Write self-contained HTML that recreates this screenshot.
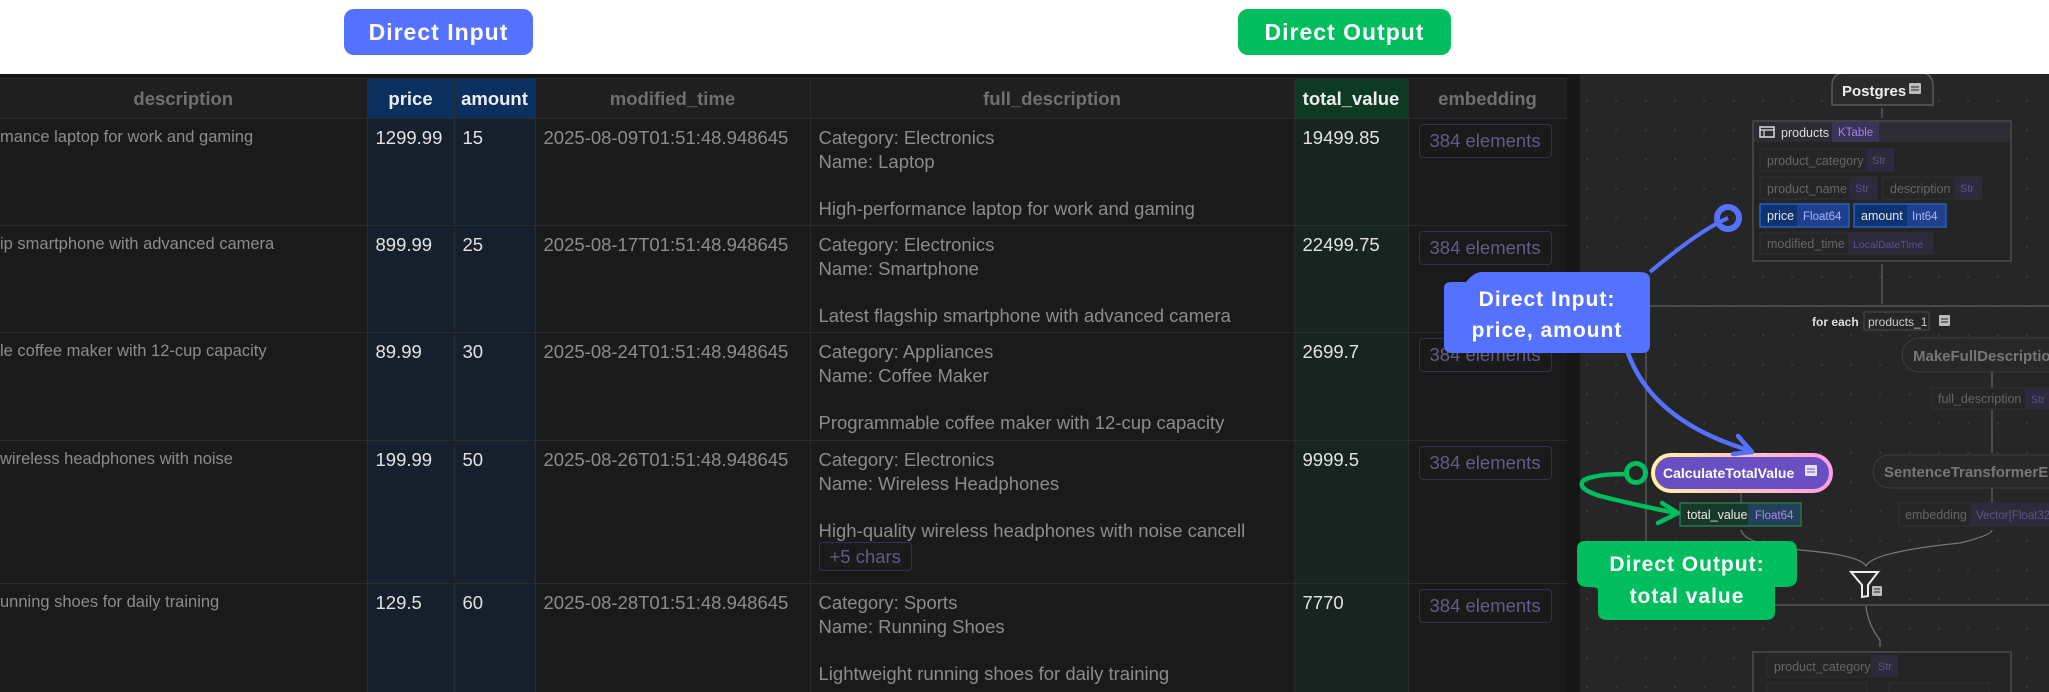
<!DOCTYPE html>
<html><head><meta charset="utf-8"><style>
*{margin:0;padding:0;box-sizing:border-box}
html{width:2049px;height:692px;overflow:hidden}
body{width:2049px;height:692px;overflow:hidden;background:#fff;position:relative;font-family:"Liberation Sans",sans-serif}
.badge{position:absolute;top:9px;height:46px;border-radius:10px;color:#fff;font-weight:bold;font-size:23px;letter-spacing:1px;display:flex;align-items:center;justify-content:center}
#dark{position:absolute;left:0;top:74px;width:2049px;height:618px;background:#151515}
#tw{position:absolute;left:0;top:78px;width:1567px;height:614px;overflow:hidden}
table{border-collapse:collapse;table-layout:fixed;width:1567px;font-size:18.5px;color:#8c8c8c}
th{height:40px;background:#1f1f1f;color:#707070;font-size:18.5px;font-weight:bold;border:1px solid #2b2b2b;text-align:center}
td{background:#1a1a1a;border:1px solid #2b2b2b;vertical-align:top;padding:7px 8px 0 8px;line-height:23.5px;white-space:nowrap;overflow:hidden}
td.d{padding-left:0;border-left:none;font-size:16.5px}
th:first-child{border-left:none}
th.b{background:#0b2f5e;color:#eee}
td.b{background:#161f2c;color:#e2e2e2}
th.g{background:#0e3a24;color:#eee}
td.g{background:#172420;color:#e2e2e2}
.emb{display:inline-block;border:1.5px solid #35314a;border-radius:4px;color:#625c88;padding:4px 10px;line-height:24px;margin-top:-2px;margin-left:2px}
.more{display:inline-block;border:1.5px solid #35314a;border-radius:4px;color:#625c88;padding:2px 10px;line-height:23px}
</style></head><body>
<div class="badge" style="left:344px;width:189px;background:#5471ff">Direct Input</div>
<div class="badge" style="left:1238px;width:213px;background:#00bd5e">Direct Output</div>
<div id="dark"></div>
<div id="tw"><table>
<colgroup><col style="width:367px"><col style="width:87px"><col style="width:81px"><col style="width:275px"><col style="width:484px"><col style="width:114px"><col style="width:159px"></colgroup>
<tr><th>description</th><th class="b">price</th><th class="b">amount</th><th>modified_time</th><th>full_description</th><th class="g">total_value</th><th>embedding</th></tr>
<tr style="height:107px"><td class="d">mance laptop for work and gaming</td><td class="b">1299.99</td><td class="b">15</td><td>2025-08-09T01:51:48.948645</td><td>Category: Electronics<br>Name: Laptop<br><br>High-performance laptop for work and gaming</td><td class="g">19499.85</td><td><span class="emb">384 elements</span></td></tr>
<tr style="height:107px"><td class="d">ip smartphone with advanced camera</td><td class="b">899.99</td><td class="b">25</td><td>2025-08-17T01:51:48.948645</td><td>Category: Electronics<br>Name: Smartphone<br><br>Latest flagship smartphone with advanced camera</td><td class="g">22499.75</td><td><span class="emb">384 elements</span></td></tr>
<tr style="height:108px"><td class="d">le coffee maker with 12-cup capacity</td><td class="b">89.99</td><td class="b">30</td><td>2025-08-24T01:51:48.948645</td><td>Category: Appliances<br>Name: Coffee Maker<br><br>Programmable coffee maker with 12-cup capacity</td><td class="g">2699.7</td><td><span class="emb">384 elements</span></td></tr>
<tr style="height:143px"><td class="d">wireless headphones with noise</td><td class="b">199.99</td><td class="b">50</td><td>2025-08-26T01:51:48.948645</td><td>Category: Electronics<br>Name: Wireless Headphones<br><br>High-quality wireless headphones with noise cancell<br><span class="more">+5 chars</span></td><td class="g">9999.5</td><td><span class="emb">384 elements</span></td></tr>
<tr style="height:120px"><td class="d">unning shoes for daily training</td><td class="b">129.5</td><td class="b">60</td><td>2025-08-28T01:51:48.948645</td><td>Category: Sports<br>Name: Running Shoes<br><br>Lightweight running shoes for daily training</td><td class="g">7770</td><td><span class="emb">384 elements</span></td></tr>
</table></div>
<svg style="position:absolute;left:1400px;top:74px" width="649" height="618" viewBox="1400 74 649 618" font-family="Liberation Sans, sans-serif">
<defs>
<pattern id="dots" patternUnits="userSpaceOnUse" x="1586" y="100" width="29.33" height="29.33"><circle cx="0.8" cy="0.8" r="1.2" fill="#3d3d3d"/></pattern>
<linearGradient id="gb" x1="0" x2="1"><stop offset="0" stop-color="#fff3a0"/><stop offset="1" stop-color="#ff9ee0"/></linearGradient>
</defs>
<rect x="1567" y="74" width="13" height="618" fill="#161616"/>
<rect x="1580" y="74" width="469" height="618" fill="#262626"/>
<rect x="1580" y="74" width="469" height="618" fill="url(#dots)"/>
<path d="M1832 105 V86 Q1832 73 1845 73 H1920 Q1933 73 1933 86 V105 Z" fill="#2a2a2a" stroke="#5a5a5a" stroke-width="1.5"/>
<text x="1842" y="96" fill="#eee" font-size="15" font-weight="bold">Postgres</text>
<rect x="1909" y="83" width="12" height="11" fill="#bbb" rx="1"/><path d="M1911 87h8M1911 90h8" stroke="#2a2a2a"/>
<path d="M1882 108V118M1882 264V304" stroke="#666" stroke-width="1.2"/>
<rect x="1753" y="121" width="258" height="140" fill="#242424" stroke="#555" stroke-width="1.2"/>
<rect x="1753.6" y="121.6" width="256.8" height="20.5" fill="#2e2c33"/>
<rect x="1760" y="127" width="14" height="10" fill="none" stroke="#ddd" stroke-width="1.5"/><path d="M1760 130h14M1764 130v7" stroke="#ddd" stroke-width="1.2"/>
<text x="1781" y="137" fill="#ddd" font-size="12.5">products</text>
<rect x="1832" y="122" width="47" height="20" fill="#3b3358"/><text x="1838" y="136" fill="#9b88e6" font-size="11.5">KTable</text>
<g font-size="12.5">
<rect x="1760" y="149" width="134" height="22" fill="#262626" stroke="#303030"/><rect x="1866" y="149" width="28" height="22" fill="#2e2a3c"/>
<text x="1767" y="165" fill="#666">product_category</text><text x="1872" y="164" fill="#5b5288" font-size="11">Str</text>
<rect x="1760" y="177" width="117" height="22" fill="#262626" stroke="#303030"/><rect x="1849" y="177" width="28" height="22" fill="#2e2a3c"/>
<text x="1767" y="193" fill="#666">product_name</text><text x="1855" y="192" fill="#5b5288" font-size="11">Str</text>
<rect x="1883" y="177" width="99" height="22" fill="#262626" stroke="#303030"/><rect x="1954" y="177" width="28" height="22" fill="#2e2a3c"/>
<text x="1890" y="193" fill="#666">description</text><text x="1960" y="192" fill="#5b5288" font-size="11">Str</text>
<rect x="1760" y="204" width="89" height="23" fill="#0d3370" stroke="#2e6fe0" stroke-width="1.2"/><rect x="1797" y="205" width="51" height="21" fill="#20408e"/>
<text x="1767" y="220" fill="#e8e8e8">price</text><text x="1803" y="220" fill="#a9b8ff" font-size="11.5">Float64</text>
<rect x="1854" y="204" width="92" height="23" fill="#0d3370" stroke="#2e6fe0" stroke-width="1.2"/><rect x="1907" y="205" width="38" height="21" fill="#20408e"/>
<text x="1861" y="220" fill="#e8e8e8">amount</text><text x="1912" y="220" fill="#a9b8ff" font-size="11.5">Int64</text>
<rect x="1760" y="233" width="173" height="21" fill="#262626" stroke="#303030"/><rect x="1848" y="233" width="85" height="21" fill="#2e2a3c"/>
<text x="1767" y="248" fill="#666">modified_time</text><text x="1853" y="248" fill="#5b5288" font-size="10.5">LocalDateTime</text>
</g>
<path d="M1646 306H2049M1646 306V605H2049" fill="none" stroke="#555" stroke-width="1.5"/>
<text x="1812" y="326" fill="#ddd" font-size="12" font-weight="bold">for each</text>
<rect x="1864" y="312" width="65" height="18" fill="#262626" stroke="#4a4a4a"/><text x="1868" y="326" fill="#ccc" font-size="12">products_1</text>
<rect x="1939" y="315" width="11" height="11" fill="#bbb" rx="1"/><path d="M1941 319h7M1941 322h7" stroke="#262626"/>
<rect x="1902" y="338" width="200" height="34" rx="17" fill="#282828" stroke="#3e3e3e"/>
<text x="1913" y="361" fill="#777" font-size="15" font-weight="bold">MakeFullDescription</text>
<path d="M1992 372V388M1992 409V453M1992 488V503" stroke="#666" stroke-width="1.2"/>
<rect x="1932" y="388" width="130" height="21" fill="#262626" stroke="#303030"/><rect x="2025" y="388" width="30" height="21" fill="#2e2a3c"/>
<text x="1938" y="403" fill="#666" font-size="12.5">full_description</text><text x="2031" y="403" fill="#5b5288" font-size="11">Str</text>
<rect x="1873" y="455" width="220" height="33" rx="16.5" fill="#282828" stroke="#3e3e3e"/>
<text x="1884" y="477" fill="#777" font-size="15" font-weight="bold">SentenceTransformerEmbed</text>
<rect x="1899" y="503" width="160" height="23" fill="#262626" stroke="#303030"/><rect x="1970" y="503" width="90" height="23" fill="#2e2a3c"/>
<text x="1905" y="519" fill="#666" font-size="12.5">embedding</text><text x="1976" y="519" fill="#5b5288" font-size="11.5">Vector[Float32]</text>
<rect x="1653" y="455" width="178" height="36" rx="18" fill="#6a4fc2" stroke="url(#gb)" stroke-width="4"/>
<text x="1663" y="478" fill="#fff" font-size="14" font-weight="bold">CalculateTotalValue</text>
<rect x="1805" y="465" width="12" height="11" fill="#e8e0ff" rx="1"/><path d="M1807 469h8M1807 472h8" stroke="#6a4fc2"/>
<path d="M1741 493V503" stroke="#666"/>
<rect x="1680" y="503" width="121" height="23" fill="#17382a" stroke="#2a8a5a" stroke-width="1.2"/><rect x="1748" y="504" width="52" height="21" fill="#24405a"/>
<text x="1687" y="519" fill="#e8e8e8" font-size="12.5">total_value</text><text x="1755" y="519" fill="#a48ef0" font-size="11.5">Float64</text>
<path d="M1741 530Q1745 545 1800 550Q1860 555 1866 566Q1872 552 1960 543Q1992 535 1992 530" fill="none" stroke="#777" stroke-width="1.2"/>
<path d="M1851 572H1878L1868 585V596L1862 597V585Z" fill="none" stroke="#eee" stroke-width="2"/>
<rect x="1872" y="586" width="10" height="10" fill="#bbb" rx="1"/><path d="M1874 589h6M1874 592h6" stroke="#262626"/>
<path d="M1866 606Q1868 625 1880 640V647" fill="none" stroke="#777" stroke-width="1.2"/>
<rect x="1753" y="652" width="258" height="60" fill="#242424" stroke="#555" stroke-width="1.2"/>
<rect x="1767" y="655" width="130" height="22" fill="#262626" stroke="#303030"/><rect x="1871" y="655" width="27" height="22" fill="#2e2a3c"/>
<text x="1774" y="671" fill="#666" font-size="12.5">product_category</text><text x="1878" y="670" fill="#5b5288" font-size="11">Str</text>
<rect x="1767" y="683" width="100" height="12" fill="#262626" stroke="#303030"/><rect x="1889" y="683" width="100" height="12" fill="#262626" stroke="#303030"/>
<path d="M1728 218Q1700 230 1650 272" fill="none" stroke="#5471ff" stroke-width="4"/>
<circle cx="1728" cy="218" r="11" fill="none" stroke="#5471ff" stroke-width="6"/>
<path d="M1627 350Q1650 420 1748 450" fill="none" stroke="#5471ff" stroke-width="4.5"/>
<path d="M1738 436L1752 452L1733 454" fill="none" stroke="#5471ff" stroke-width="4.5" stroke-linejoin="round" stroke-linecap="round"/>
<path d="M1444 288Q1444 282 1452 282H1466Q1472 274 1480 272H1640Q1650 272 1650 280V345Q1650 353 1642 353H1452Q1444 353 1444 345Z" fill="#5471ff"/>
<text x="1547" y="306" fill="#fff" font-size="21" font-weight="bold" text-anchor="middle" letter-spacing="1">Direct Input:</text>
<text x="1547" y="337" fill="#fff" font-size="21" font-weight="bold" text-anchor="middle" letter-spacing="1">price, amount</text>
<path d="M1627 474Q1595 474 1584 480Q1575 488 1600 496Q1640 506 1676 513" fill="none" stroke="#00bd5e" stroke-width="4.5"/>
<circle cx="1636" cy="473" r="9.5" fill="none" stroke="#00bd5e" stroke-width="5"/>
<path d="M1662 503L1678 513L1658 523" fill="none" stroke="#00bd5e" stroke-width="4.5" stroke-linejoin="round" stroke-linecap="round"/>
<path d="M1585 541H1788Q1797 541 1797 550V578Q1797 587 1785 587H1775V612Q1775 620 1766 620H1607Q1598 620 1598 612V590Q1598 587 1588 587Q1577 587 1577 578V549Q1577 541 1585 541Z" fill="#00bd5e"/>
<text x="1687" y="571" fill="#fff" font-size="21" font-weight="bold" text-anchor="middle" letter-spacing="1">Direct Output:</text>
<text x="1687" y="603" fill="#fff" font-size="21" font-weight="bold" text-anchor="middle" letter-spacing="1">total value</text>
</svg>
</body></html>
